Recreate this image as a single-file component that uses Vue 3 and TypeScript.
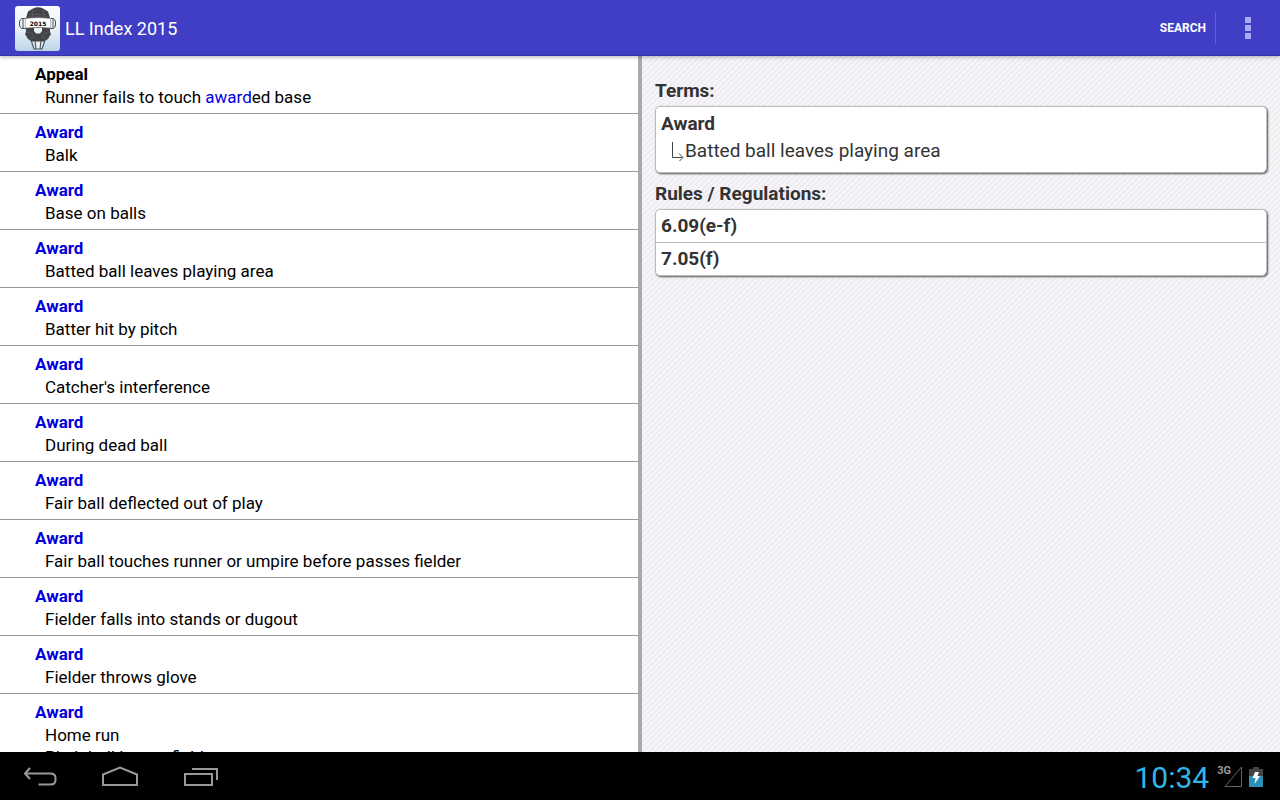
<script setup lang="ts">
interface Entry {
  term: string
  before: string
  hit?: string
  after?: string
}

const entries: Entry[] = [
  { term: 'Appeal', before: 'Runner fails to touch ', hit: 'award', after: 'ed base' },
  { term: 'Award', before: 'Balk' },
  { term: 'Award', before: 'Base on balls' },
  { term: 'Award', before: 'Batted ball leaves playing area' },
  { term: 'Award', before: 'Batter hit by pitch' },
  { term: 'Award', before: "Catcher's interference" },
  { term: 'Award', before: 'During dead ball' },
  { term: 'Award', before: 'Fair ball deflected out of play' },
  { term: 'Award', before: 'Fair ball touches runner or umpire before passes fielder' },
  { term: 'Award', before: 'Fielder falls into stands or dugout' },
  { term: 'Award', before: 'Fielder throws glove' },
  { term: 'Award', before: 'Home run\nPitch ball leaves field' },
]

const rules: string[] = ['6.09(e-f)', '7.05(f)']
</script>

<template>
  <div class="screen">
    <header class="bar">
      <svg class="logo" viewBox="0 0 45 45" aria-hidden="true">
        <defs>
          <linearGradient id="tile" x1="0" y1="0" x2="0" y2="1">
            <stop offset="0" stop-color="#fbfdfe" />
            <stop offset="0.5" stop-color="#eaf2f8" />
            <stop offset="1" stop-color="#bcd5e9" />
          </linearGradient>
        </defs>
        <rect width="45" height="45" rx="3" fill="url(#tile)" />
        <path d="M16 34l3 9h8l3-9M20 35l1 8M26 35l-1 8" fill="#e8f0f6" stroke="#4c555c" stroke-width="1.200" />
        <path d="M18 2.500q5-2.500 10 0l5 3 2 6.500v14l1 2-3 5-4 2.500H17L13 33l-3-5 1-2V12l2-6.500z" fill="#434446" />
        <path d="M14 8l17 1M13 11h20M18 4l-1 8M28 4l1 8M12 26l6 2M34 26l-6 2M15 33l4-3M31 33l-4-3" stroke="#606264" stroke-width="0.700" />
        <path d="M19 22h8v3l-2 2.500h-4L19 25z" fill="#edf3f7" />
        <path d="M11 12.500H6.500l-2 2.500v5l2 2.500H11M35 12.500h3.500l2 2.500v5l-2 2.500H35M8 12.500v10M38 12.500v10" fill="#e8eef2" stroke="#50565a" stroke-width="1" />
        <path d="M10.500 12.500q12.500-1.500 25 0V22q-12.500-1.500-25 0z" fill="#fff" stroke="#888" stroke-width="0.500" />
        <text x="23" y="19.500" text-anchor="middle" class="logo-year">2015</text>
      </svg>
      <h1 class="title">LL Index 2015</h1>
      <button class="search" type="button">SEARCH</button>
      <button class="more" type="button" aria-label="More options">
        <svg width="6" height="22" viewBox="0 0 6 22"><path d="M0 0h6v6H0zM0 8h6v6H0zM0 16h6v6H0z" fill="#aaaaf4" /></svg>
      </button>
    </header>

    <main class="content">
      <ul class="list">
        <li v-for="(entry, i) in entries" :key="i" class="entry">
          <div class="term" :class="{ match: entry.term === 'Award' }">{{ entry.term }}</div>
          <div class="detail">{{ entry.before }}<span v-if="entry.hit" class="hit">{{ entry.hit }}</span>{{ entry.after }}</div>
        </li>
      </ul>
      <div class="divider"></div>
      <section class="pane">
        <h2 class="heading">Terms:</h2>
        <div class="card terms">
          <div class="card-title">Award</div>
          <div class="sub">
            <svg width="14" height="20" viewBox="0 0 14 20" aria-hidden="true">
              <path d="M1.500 1v15.500H11M8 12.500l4 4-4 4" fill="none" stroke="#444" stroke-width="1" />
            </svg>
            <span>Batted ball leaves playing area</span>
          </div>
        </div>
        <h2 class="heading">Rules / Regulations:</h2>
        <div class="card">
          <div v-for="rule in rules" :key="rule" class="rule">{{ rule }}</div>
        </div>
      </section>
    </main>

    <footer class="system">
      <button class="nav" type="button" aria-label="Back">
        <svg width="40" height="24" viewBox="0 0 40 24"><path d="M10 2L5 7.500l5 5.500M5 7.500h25.500q5 0 5 4.500v2q0 4.500-5 4.500H18.500" fill="none" stroke="#999" stroke-width="2" /></svg>
      </button>
      <button class="nav" type="button" aria-label="Home">
        <svg width="40" height="24" viewBox="0 0 40 24"><path d="M3 19V8.500l17-7 17 7V19z" fill="none" stroke="#999" stroke-width="2" /></svg>
      </button>
      <button class="nav" type="button" aria-label="Recent apps">
        <svg width="40" height="24" viewBox="0 0 40 24"><path d="M5 8h27v11H5zM12 3h25v11" fill="none" stroke="#999" stroke-width="2" /></svg>
      </button>
      <div class="status">
        <time class="clock">10:34</time>
        <span class="net">3G</span>
        <svg class="signal" width="18" height="22" viewBox="0 0 18 22" aria-hidden="true"><path d="M1 19.500L17.500 0v19.500z" fill="none" stroke="#666" stroke-width="1" /></svg>
        <svg width="14" height="22" viewBox="0 0 14 22" aria-hidden="true">
          <path d="M4 0h6v2h4v8H0V2h4z" fill="#444" />
          <path d="M0 9h14v11H0z" fill="#2b8fb5" />
          <path d="M6 5h4L8.500 9H11l-5.500 8 1-6H3.500z" fill="#fff" />
        </svg>
      </div>
    </footer>
  </div>
</template>

<style>
body {
  margin: 0;
}
</style>

<style scoped>
.screen {
  display: flex;
  flex-direction: column;
  height: 100vh;
  font-family: Roboto, "Liberation Sans", sans-serif;
  color: #000;
}
button {
  border: 0;
  padding: 0;
  background: none;
  color: inherit;
  font-family: inherit;
}
svg {
  display: block;
  flex: none;
}
.bar {
  display: flex;
  align-items: center;
  height: 56px;
  flex: none;
  box-sizing: border-box;
  padding: 1px 0 0 15px;
  background: #403ec4;
  border-bottom: 1px solid #3633a8;
  box-shadow: 0 1px 4px rgba(0, 0, 0, 0.3);
  color: #fff;
  position: relative;
}
.logo {
  width: 45px;
  height: 45px;
}
.logo-year {
  font: bold 6px "DejaVu Sans", sans-serif;
}
.title {
  flex: 1;
  margin: 0 0 0 5px;
  font-size: 18px;
  font-weight: 400;
}
.search {
  height: 32px;
  padding-right: 9px;
  border-right: 1px solid #6260d2;
  font-size: 12px;
  font-weight: 700;
}
.more {
  display: flex;
  align-items: center;
  justify-content: center;
  width: 64px;
  height: 48px;
}
.content {
  display: grid;
  grid-template-columns: minmax(0, 1fr) 4px minmax(0, 1fr);
  flex: 1;
  min-height: 0;
}
.list {
  margin: 0;
  padding: 0;
  list-style: none;
  overflow: hidden;
  background: #fff;
}
.divider {
  background: #a9a9a9;
}
.entry {
  padding: 6px 0 5px 35px;
  border-bottom: 1px solid #999;
  font-size: 17px;
}
.term {
  line-height: 24px;
  font-weight: 700;
}
.match,
.hit {
  color: #0000dc;
}
.detail {
  padding-left: 10px;
  line-height: 22px;
  white-space: pre-line;
}
.pane {
  padding: 22px 13px 0;
  background: repeating-linear-gradient(135deg, #efedf1 0 2px, #f7f5f7 2px 4px);
  color: #333;
  font-size: 19px;
}
.heading {
  margin: 0;
  font-size: 19px;
  font-weight: 700;
  line-height: 25px;
}
.card {
  margin: 3px 0 8px;
  border: 1px solid #bbb;
  border-radius: 5px;
  background: #fff;
  box-shadow: 1px 1px 2px #555;
}
.terms {
  padding: 4px 0 8px;
}
.card-title {
  padding-left: 5px;
  font-weight: 700;
  line-height: 26px;
}
.sub {
  display: flex;
  align-items: center;
  padding-left: 15px;
  line-height: 27px;
}
.rule {
  padding-left: 5px;
  font-weight: 700;
  line-height: 32px;
}
.rule + .rule {
  border-top: 1px solid #bbb;
}
.system {
  display: flex;
  align-items: center;
  flex: none;
  box-sizing: border-box;
  height: 48px;
  padding-top: 3px;
  background: #000;
}
.nav {
  display: flex;
  justify-content: center;
  width: 80px;
}
.status {
  display: flex;
  flex: 1;
  align-items: center;
  justify-content: flex-end;
  padding-right: 17px;
}
.clock {
  margin-right: 8px;
  color: #33b5e5;
  font-size: 30px;
}
.net {
  align-self: flex-start;
  margin: 4px -7px 0 0;
  color: #999;
  font-size: 11px;
  font-weight: 700;
}
.signal {
  margin-right: 7px;
}
</style>
